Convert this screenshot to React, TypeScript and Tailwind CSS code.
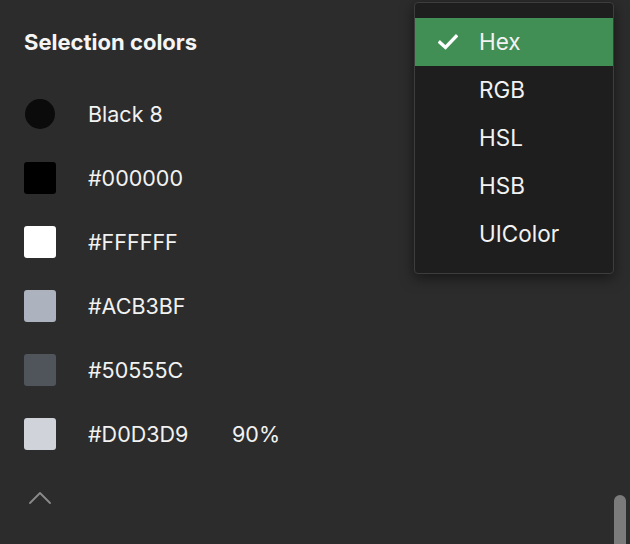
import { ChevronUp } from "lucide-react";

const font = { fontFamily: "Inter, 'Liberation Sans', sans-serif" };

type Swatch = {
  label: string;
  color: string;
  round?: boolean;
  extra?: string;
};

const swatches: Swatch[] = [
  { label: "Black 8", color: "bg-[#0b0b0b]", round: true },
  { label: "#000000", color: "bg-[#000000]" },
  { label: "#FFFFFF", color: "bg-[#ffffff]" },
  { label: "#ACB3BF", color: "bg-[#acb3bf]" },
  { label: "#50555C", color: "bg-[#50555c]" },
  { label: "#D0D3D9", color: "bg-[#d0d3d9]", extra: "90%" },
];

const formats = ["Hex", "RGB", "HSL", "HSB", "UIColor"];

function SwatchRow({ label, color, round, extra }: Swatch) {
  return (
    <div className="flex h-16 items-center">
      <div className="flex w-[88px] shrink-0 items-center pl-6">
        {round ? (
          <div className={`ml-px h-[30px] w-[30px] rounded-full ${color}`} />
        ) : (
          <div className={`h-8 w-8 rounded-[3px] ${color}`} />
        )}
      </div>
      <span className="w-[144px] text-[21.5px] text-[#f2f2f2]">{label}</span>
      {extra && <span className="text-[21.5px] text-[#f2f2f2]">{extra}</span>}
    </div>
  );
}

function FormatMenu() {
  return (
    <div className="absolute left-[414px] top-[2px] w-[200px] rounded-[4px] border border-[#3d3d3d] bg-[#1e1e1e] py-[15px] shadow-[0_4px_14px_rgba(0,0,0,0.5)]">
      {formats.map((f, i) => (
        <div
          key={f}
          className={`flex h-12 items-center text-[22.5px] text-[#f2f2f2] ${i === 0 ? "bg-[#428f56]" : ""}`}
        >
          <div className="flex w-[64px] justify-center pl-[2px]">
            {i === 0 && (
              <svg width="20" height="16" viewBox="0 0 20 16" fill="none">
                <path d="M2 8.5 L7.5 13.5 L18 2.5" stroke="white" strokeWidth="3.4" strokeLinecap="square" />
              </svg>
            )}
          </div>
          <span>{f}</span>
        </div>
      ))}
    </div>
  );
}

export default function App() {
  return (
    <div className="relative h-[544px] w-[630px] overflow-hidden bg-[#2c2c2c]" style={font}>
      <div className="pt-[26px]">
        <h2 className="pl-6 text-[22px] font-bold leading-[32px] text-[#f5f5f5]">Selection colors</h2>
        <div className="mt-[24px]">
          {swatches.map((s) => (
            <SwatchRow key={s.label} {...s} />
          ))}
        </div>
        <div className="pl-[20px] pt-[12px]">
          <ChevronUp size={40} strokeWidth={1.1} className="text-[#8a8a8a]" />
        </div>
      </div>
      <FormatMenu />
      <div className="absolute right-[4px] top-[495px] h-[60px] w-[12px] rounded-full bg-[#7b7b7b]" />
    </div>
  );
}
